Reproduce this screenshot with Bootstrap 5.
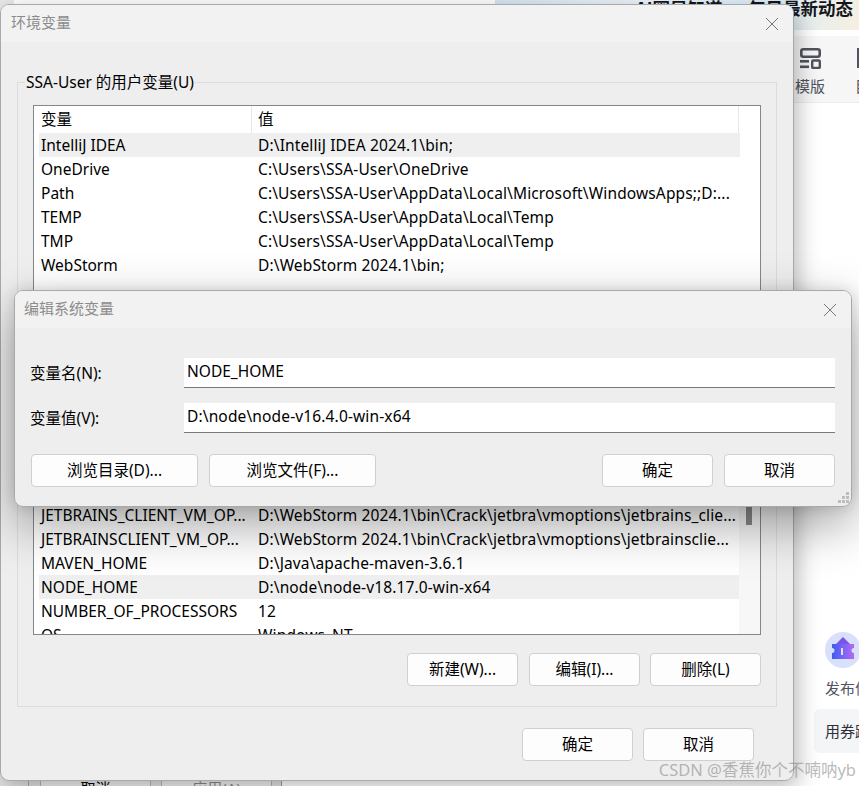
<!DOCTYPE html>
<html lang="zh-CN">
<head>
  <meta charset="UTF-8" />
  <title>环境变量</title>
  <link href="https://cdn.jsdelivr.net/npm/bootstrap@5.3.0/dist/css/bootstrap.min.css" rel="stylesheet" />
  <style>
    html, body { height: 100%; }
    body {
      margin: 0;
      overflow: hidden;
      background: #fff;
      font-family: "Noto Sans", "Noto Sans CJK SC", sans-serif;
      font-size: 15.5px;
      color: #000;
    }
    .desk { position: relative; width: 859px; height: 786px; overflow: hidden; }

    /* page behind the dialogs */
    .bg-banner {
      position: absolute; left: 495px; top: 0; width: 364px; height: 30px;
      background: linear-gradient(100deg, #d6e6f2 0%, #eef6fb 40%, #dceefa 75%, #f6efe0 100%);
      text-align: right; padding-right: 6px;
      font-size: 17.5px; line-height: 16px; font-weight: 700;
      font-family: "Noto Sans CJK SC", sans-serif; white-space: nowrap;
      color: #15161c;
    }
    .bg-toolbar {
      position: absolute; left: 793px; top: 36px; width: 66px; height: 67px;
      background: #f6f6f7; border-bottom: 1px solid #ececec;
    }
    .bg-tool-label { position: absolute; left: 2px; top: 38px; font-size: 15px; line-height: 24px; color: #50525e; white-space: nowrap; }
    .bg-tool-icon { position: absolute; left: 7px; top: 12px; }
    .bg-tool-edge { position: absolute; left: 64px; top: 12px; width: 2px; height: 20px; background: #50525e; }
    .bg-tool-edge2 { position: absolute; left: 62px; top: 38px; font-size: 15px; line-height: 24px; width: 4px; overflow: hidden; color: #50525e; }
    .bg-ticket { position: absolute; left: 825px; top: 632px; }
    .bg-pub { position: absolute; left: 825px; top: 677px; font-size: 15px; line-height: 22px; color: #50525e; white-space: nowrap; }
    .bg-coupon {
      position: absolute; left: 814px; top: 709px; width: 60px; height: 44px;
      background: #f4f5f7; border-radius: 6px; padding: 10px 0 0 11px;
      font-size: 15px; line-height: 24px; color: #2c2e38; white-space: nowrap;
    }
    .bg-strip { position: absolute; left: 0; top: 0; width: 14px; height: 786px; background: #e8e8e8; }
    .bg-under {
      position: absolute; left: 0; top: 770px; width: 282px; height: 16px;
      background: #e2e2e2; border-right: 1px solid #9a9a9a;
    }
    .bg-under-btn {
      position: absolute; top: 0; height: 20px; width: 111px;
      background: #efefef; border: 1px solid #b5b5b5;
      text-align: center; font-size: 15px; line-height: 35px;
    }
    .bg-under-a { left: 40px; color: #000; }
    .bg-under-b { left: 161px; color: #8a8a8a; }
    .bg-under-line { position: absolute; left: 28px; top: 0; width: 1px; height: 16px; background: #a8a8a8; }

    /* windows */
    .win {
      position: absolute;
      background: #eeeeee;
      border: 1px solid #a9a9a9;
      border-radius: 9px;
      overflow: hidden;
    }
    .win-shell { position: absolute; border-radius: 9px; }
    .win-main { left: 0; top: 4px; width: 794px; height: 777px; }
    .shell-main { left: 0; top: 4px; width: 794px; height: 777px; box-shadow: 4px 6px 22px rgba(0,0,0,.28); }
    .win-edit { left: 14px; top: 290px; width: 838px; height: 217px; }
    .shell-edit { left: 14px; top: 290px; width: 838px; height: 217px; box-shadow: 0 18px 50px rgba(0,0,0,.36), 0 0 14px rgba(0,0,0,.12); }
    .win-title {
      height: 37px; background: #f2f2f2; padding-bottom: 2px;
      color: #8c8c8c; font-size: 15px;
    }
    .win-main .win-title { padding-left: 10px; }
    .win-edit .win-title { padding-left: 9px; height: 37px; }
    .win-close { width: 14px; height: 14px; display: block; margin-top: 2px; }
    .win-main .win-close { margin-right: 14px; }
    .win-edit .win-close { margin-right: 14px; }

    /* group box + list */
    .group-wrap { padding: 40px 16px 0 16px; }
    .group-box {
      position: relative; height: 625px;
      border: 1px solid #dcdcdc;
      padding: 22px 15px 0 15px;
    }
    .group-legend {
      position: absolute; left: 7px; top: -11px; padding: 0 1px;
      background: #eeeeee; line-height: 20px;
    }
    .var-list {
      position: relative; height: 530px; overflow: hidden;
      background: #fff; border: 1px solid #83878c; padding-left: 5px;
    }
    .var-head { height: 27px; width: 700px; color: #000; }
    .var-head-name { width: 213px; height: 27px; line-height: 27px; padding-left: 2px; border-right: 1px solid #e6e6e6; }
    .var-head-val { flex: 1; height: 27px; line-height: 27px; padding-left: 6px; border-right: 1px solid #e6e6e6; }
    .var-row { height: 24px; width: 701px; line-height: 24px; white-space: nowrap; }
    .var-row.is-sel { background: #efefef; }
    .var-name { width: 214px; padding-left: 2px; flex: none; }
    .var-val { padding-left: 5px; letter-spacing: .13px; }
    .var-gap { height: 226px; }
    .var-track { position: absolute; right: 0; top: 380px; width: 21px; bottom: 0; background: #f7f7f7; }
    .var-thumb { position: absolute; left: 7px; top: 0; width: 6px; height: 39px; background: #8a8a8a; }

    .win-btn {
      width: 111px; height: 33px; padding: 0;
      background: #fdfdfd; border: 1px solid #d0d0d0; border-radius: 4px;
      color: #000; font-size: 15.5px; line-height: 31px;
    }
    .win-btn.is-wide { width: 167px; }
    .list-actions { gap: 10px; padding: 18px 0 0 0; }
    .list-actions .win-btn:first-child { margin-right: 1px; }
    .main-actions { gap: 10px; padding: 21px 39px 0 0; }

    /* edit dialog */
    .edit-body { padding: 30px 16px 0 15px; }
    .edit-label { width: 154px; flex: none; line-height: 30px; }
    .edit-input {
      height: 30px; padding: 0 3px 4px 3px;
      background: #fff; border: 0; border-bottom: 1px solid #7a7a7a; border-radius: 0;
      font-size: 15.5px; color: #000; font-family: inherit; line-height: 24px;
    }
    #varVal { letter-spacing: .14px; }
    .edit-row { margin-bottom: 15px; }
    .edit-actions { padding: 6px 0 0 1px; }
    .edit-gap { gap: 11px; }
    .grip { position: absolute; right: 1px; bottom: 1px; }

    .wm {
      position: absolute; right: 3px; bottom: 6px;
      font-size: 16.5px; line-height: 20px; color: rgba(120,120,120,.52);
      white-space: nowrap;
    }
  </style>
</head>
<body>
  <div class="desk">
    <!-- blurred page behind -->
    <div class="bg-banner">AI圈早知道 · 每日最新动态</div>
    <div class="bg-toolbar">
      <svg class="bg-tool-icon" width="21" height="21" viewBox="0 0 21 21">
        <rect x="1.300" y="1.300" width="18.400" height="7.500" rx="2" fill="none" stroke="#50525e" stroke-width="2.600"/>
        <rect x="0" y="12" width="9" height="2.600" fill="#50525e"/>
        <rect x="0" y="17.500" width="9" height="2.600" fill="#50525e"/>
        <rect x="12.200" y="12.500" width="7.600" height="7.500" rx="1" fill="none" stroke="#50525e" stroke-width="2.400"/>
      </svg>
      <div class="bg-tool-label">模版</div>
      <div class="bg-tool-edge"></div>
      <div class="bg-tool-edge2">目</div>
    </div>
    <svg class="bg-ticket" width="36" height="36" viewBox="0 0 36 36">
      <defs>
        <linearGradient id="tk" x1="0" y1="0" x2="1" y2="0"><stop offset="0" stop-color="#3f5cf5"/><stop offset="1" stop-color="#b36af2"/></linearGradient>
      </defs>
      <circle cx="18" cy="18" r="18" fill="#d8e0fb"/>
      <path d="M18 5 L25 12 H11 Z" fill="#7a55e8"/>
      <path d="M7 12 H29 V16 A2.500 2.500 0 0 0 29 21 V27 H7 V21 A2.500 2.500 0 0 0 7 16 Z" fill="url(#tk)"/>
      <rect x="16" y="16" width="2" height="7" fill="#d8e0fb"/>
    </svg>
    <div class="bg-pub">发布信</div>
    <div class="bg-coupon">用券跟</div>
    <div class="bg-strip"></div>
    <div class="bg-under">
      <div class="bg-under-line"></div>
      <div class="bg-under-btn bg-under-a">取消</div>
      <div class="bg-under-btn bg-under-b">应用(A)</div>
    </div>

    <!-- 环境变量 -->
    <div class="win-shell shell-main"></div>
    <div class="win win-main d-flex flex-column">
      <div class="win-title d-flex align-items-center justify-content-between">
        <span>环境变量</span>
        <svg class="win-close" viewBox="0 0 14 14"><path d="M1 1 L13 13 M13 1 L1 13" stroke="#777" stroke-width="1" fill="none"/></svg>
      </div>
      <div class="group-wrap">
        <div class="group-box">
          <div class="group-legend">SSA-User 的用户变量(U)</div>
          <div class="var-list">
            <div class="var-head d-flex">
              <div class="var-head-name">变量</div>
              <div class="var-head-val">值</div>
            </div>
            <div class="var-row is-sel d-flex"><div class="var-name">IntelliJ IDEA</div><div class="var-val">D:\IntelliJ IDEA 2024.1\bin;</div></div>
            <div class="var-row d-flex"><div class="var-name">OneDrive</div><div class="var-val">C:\Users\SSA-User\OneDrive</div></div>
            <div class="var-row d-flex"><div class="var-name">Path</div><div class="var-val">C:\Users\SSA-User\AppData\Local\Microsoft\WindowsApps;;D:...</div></div>
            <div class="var-row d-flex"><div class="var-name">TEMP</div><div class="var-val">C:\Users\SSA-User\AppData\Local\Temp</div></div>
            <div class="var-row d-flex"><div class="var-name">TMP</div><div class="var-val">C:\Users\SSA-User\AppData\Local\Temp</div></div>
            <div class="var-row d-flex"><div class="var-name">WebStorm</div><div class="var-val">D:\WebStorm 2024.1\bin;</div></div>
            <div class="var-gap"></div>
            <div class="var-row d-flex"><div class="var-name">JETBRAINS_CLIENT_VM_OP...</div><div class="var-val">D:\WebStorm 2024.1\bin\Crack\jetbra\vmoptions\jetbrains_clie...</div></div>
            <div class="var-row d-flex"><div class="var-name">JETBRAINSCLIENT_VM_OP...</div><div class="var-val">D:\WebStorm 2024.1\bin\Crack\jetbra\vmoptions\jetbrainsclie...</div></div>
            <div class="var-row d-flex"><div class="var-name">MAVEN_HOME</div><div class="var-val">D:\Java\apache-maven-3.6.1</div></div>
            <div class="var-row is-sel d-flex"><div class="var-name">NODE_HOME</div><div class="var-val">D:\node\node-v18.17.0-win-x64</div></div>
            <div class="var-row d-flex"><div class="var-name">NUMBER_OF_PROCESSORS</div><div class="var-val">12</div></div>
            <div class="var-row d-flex"><div class="var-name">OS</div><div class="var-val">Windows_NT</div></div>
            <div class="var-track"><div class="var-thumb"></div></div>
          </div>
          <div class="list-actions d-flex justify-content-end">
            <button type="button" class="btn win-btn">新建(W)...</button>
            <button type="button" class="btn win-btn">编辑(I)...</button>
            <button type="button" class="btn win-btn">删除(L)</button>
          </div>
        </div>
      </div>
      <div class="main-actions d-flex justify-content-end">
        <button type="button" class="btn win-btn">确定</button>
        <button type="button" class="btn win-btn">取消</button>
      </div>
    </div>

    <!-- 编辑系统变量 -->
    <div class="win-shell shell-edit"></div>
    <div class="win win-edit">
      <div class="win-title d-flex align-items-center justify-content-between">
        <span>编辑系统变量</span>
        <svg class="win-close" viewBox="0 0 14 14"><path d="M1 1 L13 13 M13 1 L1 13" stroke="#777" stroke-width="1" fill="none"/></svg>
      </div>
      <div class="edit-body">
        <div class="edit-row d-flex">
          <label class="edit-label" for="varName">变量名(N):</label>
          <input id="varName" class="form-control edit-input" type="text" value="NODE_HOME" />
        </div>
        <div class="edit-row d-flex">
          <label class="edit-label" for="varVal">变量值(V):</label>
          <input id="varVal" class="form-control edit-input" type="text" value="D:\node\node-v16.4.0-win-x64" />
        </div>
        <div class="edit-actions d-flex justify-content-between">
          <div class="d-flex edit-gap">
            <button type="button" class="btn win-btn is-wide">浏览目录(D)...</button>
            <button type="button" class="btn win-btn is-wide">浏览文件(F)...</button>
          </div>
          <div class="d-flex edit-gap">
            <button type="button" class="btn win-btn">确定</button>
            <button type="button" class="btn win-btn">取消</button>
          </div>
        </div>
      </div>
      <svg class="grip" width="14" height="14" viewBox="0 0 14 14" fill="#bdbdbd">
        <rect x="10" y="1" width="3" height="3"/><rect x="6" y="5" width="3" height="3"/><rect x="10" y="5" width="3" height="3"/>
        <rect x="2" y="9" width="3" height="3"/><rect x="6" y="9" width="3" height="3"/><rect x="10" y="9" width="3" height="3"/>
      </svg>
    </div>

    <div class="wm">CSDN @香蕉你个不喃呐yb</div>
  </div>
  <script src="https://cdn.jsdelivr.net/npm/bootstrap@5.3.0/dist/js/bootstrap.bundle.min.js"></script>
</body>
</html>
